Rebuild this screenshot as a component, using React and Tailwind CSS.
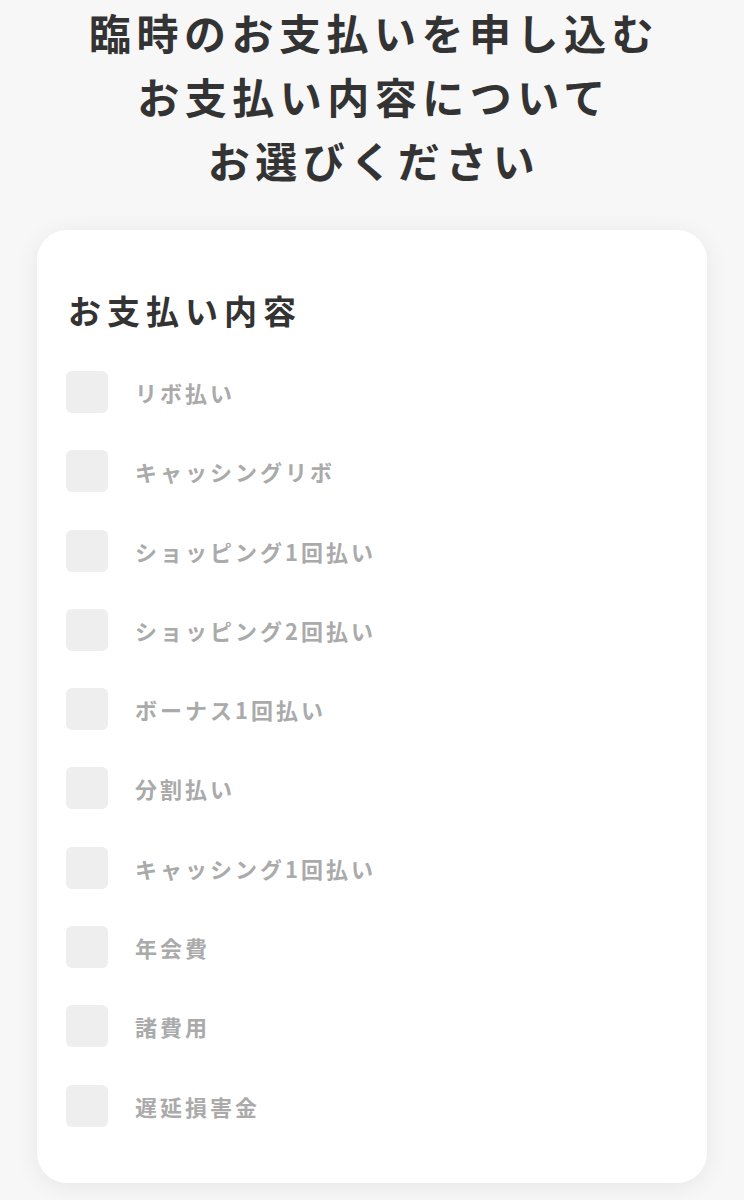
const items = [
  "リボ払い",
  "キャッシングリボ",
  "ショッピング1回払い",
  "ショッピング2回払い",
  "ボーナス1回払い",
  "分割払い",
  "キャッシング1回払い",
  "年会費",
  "諸費用",
  "遅延損害金",
];

export default function App() {
  return (
    <div
      className="min-h-[1200px] bg-[#f7f7f7] pb-10"
      style={{ fontFamily: '"Noto Sans CJK JP", "Noto Sans", sans-serif' }}
    >
      <h1 className="pl-[4px] text-center text-[42px] leading-[64px] font-semibold tracking-[5.5px] text-[#333]">
        臨時のお支払いを申し込む
        <br />
        お支払い内容について
        <br />
        お選びください
      </h1>

      <div className="mx-[37px] mt-[38px] rounded-[30px] bg-white px-[29px] pt-[56px] pb-[56px] shadow-[0_4px_24px_rgba(0,0,0,0.07)]">
        <h2 className="pl-[2px] text-[33px] leading-[48px] font-semibold tracking-[6px] text-[#333]">
          お支払い内容
        </h2>
        <div className="mt-[37px] flex flex-col gap-[37.3px]">
          {items.map((label) => (
            <label key={label} className="flex items-center gap-[27px]">
              <span className="h-[42px] w-[42px] shrink-0 rounded-[6px] bg-[#eeeeee]" />
              <span className="text-[22px] leading-[42px] font-bold tracking-[3px] text-[#aaaaaa]">
                {label}
              </span>
            </label>
          ))}
        </div>
      </div>
    </div>
  );
}
